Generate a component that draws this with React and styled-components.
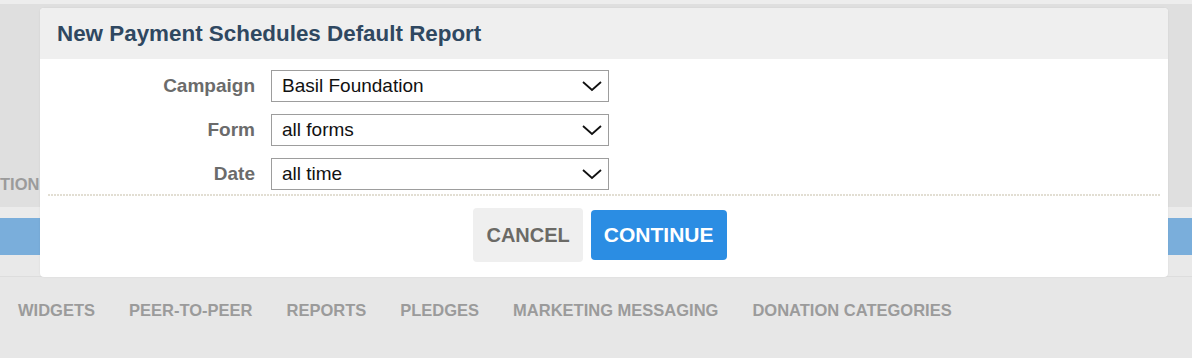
import styled, { createGlobalStyle } from 'styled-components';

const GlobalStyle = createGlobalStyle`
  html, body {
    margin: 0;
    padding: 0;
    background: #e7e7e7;
    font-family: "Liberation Sans", Arial, sans-serif;
  }
`;

const Page = styled.div`
  position: relative;
  width: 1192px;
  height: 358px;
  overflow: hidden;
  background: #e7e7e7;
`;

const TopStrip = styled.div`
  height: 4px;
  background: #ededed;
`;

const HeaderArea = styled.div`
  height: 203px;
  background: #dfdfdf;
  display: flex;
  align-items: flex-end;
  padding-bottom: 13px;
  box-sizing: border-box;
`;

const Band = styled.div`
  height: ${({ h }) => h}px;
  background: ${({ bg }) => bg};
  border-bottom: ${({ line }) => (line ? `1px solid ${line}` : 'none')};
`;

const Nav = styled.nav`
  display: flex;
  gap: 34px;
  padding-left: ${({ offset }) => offset}px;
`;

const NavItem = styled.span`
  font-size: 16.5px;
  font-weight: 700;
  color: #9b9b9b;
  white-space: nowrap;
  line-height: 19px;
`;

const BottomNav = styled.div`
  padding-top: 24px;
`;

const Modal = styled.div`
  position: absolute;
  top: 8px;
  left: 40px;
  width: 1128px;
  height: 269px;
  background: #fff;
  border-radius: 4px;
  box-shadow: 0 0 2px rgba(0, 0, 0, 0.08);
  display: flex;
  flex-direction: column;
  overflow: hidden;
`;

const ModalHeader = styled.div`
  height: 51px;
  background: #efefef;
  display: flex;
  align-items: center;
  padding-left: 17px;
`;

const Title = styled.h2`
  margin: 0;
  font-size: 22.4px;
  font-weight: 700;
  color: #2f4861;
`;

const Form = styled.div`
  display: grid;
  grid-template-columns: 215px 338px;
  column-gap: 16px;
  row-gap: 12px;
  padding-top: 11px;
  padding-bottom: 4px;
`;

const Label = styled.label`
  text-align: right;
  font-size: 19px;
  font-weight: 700;
  color: #6b6b6b;
  align-self: center;
`;

const Select = styled.div`
  height: 32px;
  box-sizing: border-box;
  border: 1px solid #9d9d9d;
  display: flex;
  align-items: center;
  justify-content: space-between;
  padding: 0 5px 0 10px;
  font-size: 19px;
  color: #111;
`;

const Divider = styled.div`
  height: 2px;
  margin: 0 8px;
  background-image: repeating-linear-gradient(
    to right,
    #e2ded3 0,
    #e2ded3 2px,
    transparent 2px,
    transparent 3px
  );
`;

const Footer = styled.div`
  display: flex;
  justify-content: center;
  align-items: center;
  gap: 8px;
  padding: 12px 8px 15px 0;
`;

const Button = styled.button`
  border: none;
  border-radius: 4px;
  font-family: "Liberation Sans", Arial, sans-serif;
  font-weight: 700;
  font-size: ${({ primary }) => (primary ? 21 : 20)}px;
  height: ${({ primary }) => (primary ? 50 : 54)}px;
  padding: 0 13px;
  background: ${({ primary }) => (primary ? '#2b8de3' : '#efefef')};
  color: ${({ primary }) => (primary ? '#fff' : '#6b6a66')};
`;

const Chevron = () => (
  <svg width="22" height="14" viewBox="0 0 22 14">
    <polyline points="2,3 11,11 20,3" fill="none" stroke="#111" strokeWidth="1.8" />
  </svg>
);

const fields = [
  ['Campaign', 'Basil Foundation'],
  ['Form', 'all forms'],
  ['Date', 'all time'],
];

const bottomNav = ['WIDGETS', 'PEER-TO-PEER', 'REPORTS', 'PLEDGES', 'MARKETING MESSAGING', 'DONATION CATEGORIES'];

export default function App() {
  return (
    <Page>
      <GlobalStyle />
      <TopStrip />
      <HeaderArea>
        <Nav offset={0}>
          <NavItem>TION</NavItem>
        </Nav>
      </HeaderArea>
      <Band h={11} bg="#ebebeb" />
      <Band h={37} bg="#7aaedb" />
      <Band h={21} bg="#e9e9e9" line="#dddddd" />
      <BottomNav>
        <Nav offset={18}>
          {bottomNav.map((item) => (
            <NavItem key={item}>{item}</NavItem>
          ))}
        </Nav>
      </BottomNav>

      <Modal>
        <ModalHeader>
          <Title>New Payment Schedules Default Report</Title>
        </ModalHeader>
        <Form>
          {fields.map(([label, value]) => [
            <Label key={label + '-l'}>{label}</Label>,
            <Select key={label + '-s'}>
              <span>{value}</span>
              <Chevron />
            </Select>,
          ])}
        </Form>
        <Divider />
        <Footer>
          <Button>CANCEL</Button>
          <Button primary>CONTINUE</Button>
        </Footer>
      </Modal>
    </Page>
  );
}
